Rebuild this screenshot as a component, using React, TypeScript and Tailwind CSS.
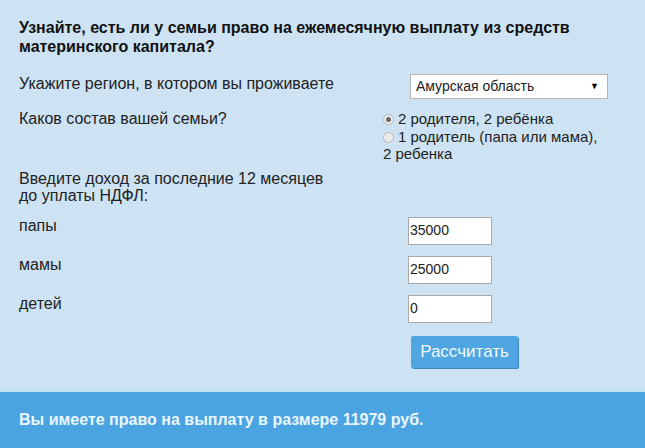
import { ReactElement } from "react";

const Radio = ({ checked }: { checked?: boolean }): ReactElement => (
  <span className="mt-[4px] mr-[4px] flex h-[11px] w-[11px] shrink-0 items-center justify-center rounded-full border border-[#b9b9b9] bg-[#ececec]">
    {checked && <span className="h-[5px] w-[5px] rounded-full bg-[#6b6b6b]" />}
  </span>
);

const IncomeRow = ({ label, value }: { label: string; value: string }): ReactElement => (
  <div className="flex items-start">
    <div className="-mt-[1px] w-[389px] text-[16px] leading-[20px]">{label}</div>
    <div className="flex h-[28px] w-[84px] items-center border border-[#a9a9a9] bg-white pl-[1px] text-[14px]">
      {value}
    </div>
  </div>
);

const App = (): ReactElement => {
  return (
    <div className="flex h-[448px] w-[645px] flex-col bg-[#cde3f3] font-['Liberation_Sans',Arial,sans-serif] text-[#222]">
      <div className="flex-1 pl-[19px] pt-[18px]">
        {/* Title */}
        <h1 className="text-[16px] font-bold leading-[19px] text-[#111]">
          Узнайте, есть ли у семьи право на ежемесячную выплату из средств
          <br />
          материнского капитала?
        </h1>

        {/* Region */}
        <div className="mt-[18px] flex items-start">
          <div className="w-[391px] text-[16px] leading-[20px]">Укажите регион, в котором вы проживаете</div>
          <div className="flex h-[25px] w-[198px] items-center justify-between border border-[#b5b5b5] bg-white pl-[5px] pr-[8px] text-[14px]">
            <span>Амурская область</span>
            <span className="text-[9px] text-black">▼</span>
          </div>
        </div>

        {/* Family */}
        <div className="mt-[10px] flex items-start">
          <div className="w-[364px] text-[16px] leading-[20px]">Каков состав вашей семьи?</div>
          <div className="w-[250px] pt-[1px] text-[15px] leading-[17.5px]">
            <div className="flex items-start">
              <Radio checked />
              <span>2 родителя, 2 ребёнка</span>
            </div>
            <div className="flex items-start">
              <Radio />
              <span>1 родитель (папа или мама),</span>
            </div>
            <div>2 ребенка</div>
          </div>
        </div>

        {/* Income */}
        <div className="mt-[7px] text-[16px] leading-[17px]">
          Введите доход за последние 12 месяцев
          <br />
          до уплаты НДФЛ:
        </div>

        <div className="mt-[13px] flex flex-col gap-[11px]">
          <IncomeRow label="папы" value="35000" />
          <IncomeRow label="мамы" value="25000" />
          <IncomeRow label="детей" value="0" />
        </div>

        <div className="mt-[13px] pl-[392px]">
          <button className="h-[32px] w-[107px] rounded-[2px] bg-[#4fa6e1] text-[17px] text-[#f2f9ff] shadow-[1px_1px_0_#3b8bc2]">
            Рассчитать
          </button>
        </div>
      </div>

      {/* Result */}
      <div className="flex h-[59px] items-center border-t-[3px] border-[#c3e2f6] bg-[#4ba4e2] pl-[19px]">
        <span className="text-[16px] font-bold text-[#eaf6ff]">Вы имеете право на выплату в размере 11979 руб.</span>
      </div>
    </div>
  );
};

export default App;
